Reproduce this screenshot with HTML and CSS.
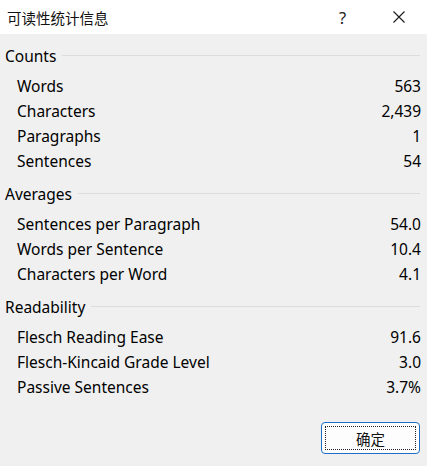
FILE: index.html
```html
<!DOCTYPE html>
<html lang="zh">
<head>
<meta charset="utf-8">
<title>可读性统计信息</title>
<link rel="stylesheet" href="styles.css">
</head>
<body>
<div class="dialog">
  <div class="titlebar">
    <div class="title">可读性统计信息</div>
    <div class="help">?</div>
    <div class="close">
      <svg width="12" height="12" viewBox="0 0 12 12"><path d="M0.5 0.5 L11.5 11.5 M11.5 0.5 L0.5 11.5" stroke="#1a1a1a" stroke-width="1.1" fill="none"/></svg>
    </div>
  </div>
  <div class="content">
    <div class="section">
      <div class="heading"><span>Counts</span><i class="rule"></i></div>
      <div class="rows">
        <div class="row"><span>Words</span><span>563</span></div>
        <div class="row"><span>Characters</span><span>2,439</span></div>
        <div class="row"><span>Paragraphs</span><span>1</span></div>
        <div class="row"><span>Sentences</span><span>54</span></div>
      </div>
    </div>
    <div class="section">
      <div class="heading"><span>Averages</span><i class="rule"></i></div>
      <div class="rows">
        <div class="row"><span>Sentences per Paragraph</span><span>54.0</span></div>
        <div class="row"><span>Words per Sentence</span><span>10.4</span></div>
        <div class="row"><span>Characters per Word</span><span>4.1</span></div>
      </div>
    </div>
    <div class="section">
      <div class="heading"><span>Readability</span><i class="rule"></i></div>
      <div class="rows">
        <div class="row"><span>Flesch Reading Ease</span><span>91.6</span></div>
        <div class="row"><span>Flesch-Kincaid Grade Level</span><span>3.0</span></div>
        <div class="row"><span>Passive Sentences</span><span>3.7%</span></div>
      </div>
    </div>
    <div class="footer">
      <button class="ok"><span class="focus">确定</span></button>
    </div>
  </div>
</div>
</body>
</html>
```
FILE: styles.css
```css
html, body {
  margin: 0;
  padding: 0;
}
body {
  width: 427px;
  height: 466px;
  background: #f0f0f0;
  font-family: "Noto Sans", "Noto Sans CJK SC", sans-serif;
  font-size: 15.5px;
  color: #000;
  overflow: hidden;
}
.titlebar {
  height: 34px;
  background: #fff;
  display: flex;
  align-items: center;
}
.title {
  padding-left: 7px;
  font-family: "Noto Sans CJK SC", sans-serif;
  font-size: 14.5px;
  color: #111;
  flex: 1;
}
.help {
  width: 10px;
  font-size: 16.5px;
  color: #222;
  margin-right: 44px;
}
.close {
  width: 12px;
  height: 12px;
  margin-right: 22px;
  display: flex;
}
.content {
  padding: 10px 6px 0 5px;
}
.section + .section {
  margin-top: 8.5px;
}
.heading {
  height: 24px;
  display: flex;
  align-items: center;
}
.heading span {
  line-height: 24px;
}
.rule {
  flex: 1;
  height: 1px;
  background: #dcdcdc;
  margin-left: 6px;
  margin-right: 1px;
  margin-top: -2px;
}
.rows {
  padding-top: 5.5px;
  padding-left: 12px;
}
.row {
  height: 25px;
  display: flex;
  justify-content: space-between;
  align-items: center;
}
.footer {
  display: flex;
  justify-content: flex-end;
  padding-top: 22.5px;
  padding-right: 1px;
}
.ok {
  width: 99px;
  height: 32px;
  padding: 3px;
  border: 1px solid #1a6fc4;
  border-radius: 4px;
  background: #fdfdfd;
  display: flex;
  box-sizing: border-box;
}
.focus {
  flex: 1;
  border: 1px dotted #222;
  display: flex;
  align-items: center;
  justify-content: center;
  font-family: "Noto Sans CJK SC", sans-serif;
  font-size: 14.5px;
  color: #111;
}
```
